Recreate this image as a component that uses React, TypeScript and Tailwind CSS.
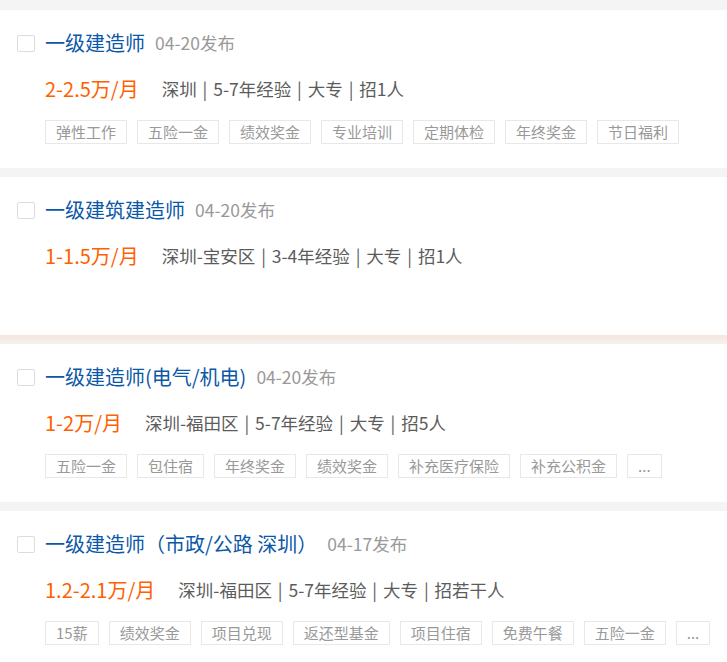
import React from "react";

type Job = {
  title: string;
  date: string;
  salary: string;
  info: string;
  tags: string[];
};

const jobs: Job[] = [
  {
    title: "一级建造师",
    date: "04-20发布",
    salary: "2-2.5万/月",
    info: "深圳 | 5-7年经验 | 大专 | 招1人",
    tags: ["弹性工作", "五险一金", "绩效奖金", "专业培训", "定期体检", "年终奖金", "节日福利"],
  },
  {
    title: "一级建筑建造师",
    date: "04-20发布",
    salary: "1-1.5万/月",
    info: "深圳-宝安区 | 3-4年经验 | 大专 | 招1人",
    tags: [],
  },
  {
    title: "一级建造师(电气/机电)",
    date: "04-20发布",
    salary: "1-2万/月",
    info: "深圳-福田区 | 5-7年经验 | 大专 | 招5人",
    tags: ["五险一金", "包住宿", "年终奖金", "绩效奖金", "补充医疗保险", "补充公积金", "..."],
  },
  {
    title: "一级建造师（市政/公路 深圳）",
    date: "04-17发布",
    salary: "1.2-2.1万/月",
    info: "深圳-福田区 | 5-7年经验 | 大专 | 招若干人",
    tags: ["15薪", "绩效奖金", "项目兑现", "返还型基金", "项目住宿", "免费午餐", "五险一金", "..."],
  },
];

function Card({ job }: { job: Job }) {
  return (
    <div className="h-[158px] bg-white pl-[17px] pt-[18px] overflow-hidden">
      <div className="flex items-center h-[30px]">
        <span className="w-[18px] h-[17px] border border-[#dcdcdc] rounded-[2px] bg-white shrink-0 mr-[10px]" />
        <span className="text-[20px] leading-[30px] text-[#0b58a8] whitespace-nowrap">{job.title}</span>
        <span className="ml-[10px] text-[17.5px] leading-[30px] text-[#999999] whitespace-nowrap">{job.date}</span>
      </div>
      <div className="flex items-center h-[30px] mt-[16px] pl-[28px] whitespace-nowrap">
        <span className="text-[20px] leading-[30px] text-[#ff6000]">{job.salary}</span>
        <span className="ml-[23px] text-[17.5px] leading-[30px] text-[#5c5c5c] [word-spacing:2px]">{job.info}</span>
      </div>
      {job.tags.length > 0 && (
        <div className="flex mt-[16px] pl-[28px] gap-[10px] whitespace-nowrap">
          {job.tags.map((t, i) => (
            <span
              key={i}
              className="h-[24px] px-[10px] border border-[#e8e8e8] text-[15px] leading-[22px] text-[#999999]"
            >
              {t}
            </span>
          ))}
        </div>
      )}
    </div>
  );
}

export default function App() {
  return (
    <div
      className="w-[727px] h-[662px] overflow-hidden bg-[#f4f4f4] pt-[10px]"
      style={{ fontFamily: '"Noto Sans CJK SC", "Noto Sans", sans-serif' }}
    >
      <Card job={jobs[0]} />
      <div className="h-[9px]" />
      <Card job={jobs[1]} />
      <div className="h-[9px] bg-gradient-to-b from-[#f6e6dc] to-[#f4f1ef]" />
      <Card job={jobs[2]} />
      <div className="h-[9px]" />
      <Card job={jobs[3]} />
    </div>
  );
}
